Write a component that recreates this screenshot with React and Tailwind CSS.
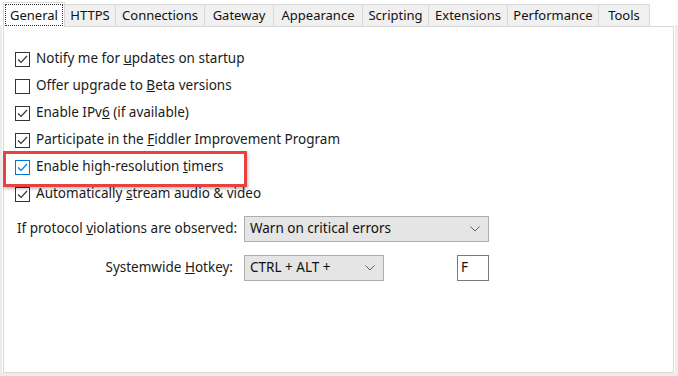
import React from "react";

const tabs = [
  { label: "HTTPS", w: 51 },
  { label: "Connections", w: 89 },
  { label: "Gateway", w: 69 },
  { label: "Appearance", w: 89 },
  { label: "Scripting", w: 66 },
  { label: "Extensions", w: 79 },
  { label: "Performance", w: 91 },
  { label: "Tools", w: 51 },
];

function Check({ checked, focus }) {
  const border = focus ? "border-[#0078d7]" : "border-[#333333]";
  const stroke = focus ? "#0078d7" : "#333333";
  return (
    <span
      className={`w-[15px] h-[15px] border bg-white flex items-center justify-center shrink-0 ${border}`}
    >
      {checked && (
        <svg width="11" height="11" viewBox="0 0 11 11">
          <path d="M1 5.5 L4 8.5 L10 2" fill="none" stroke={stroke} strokeWidth="1.2" />
        </svg>
      )}
    </span>
  );
}

function Chevron() {
  return (
    <svg width="10" height="6" viewBox="0 0 10 6">
      <path d="M0.5 0.5 L5 5 L9.5 0.5" fill="none" stroke="#606060" strokeWidth="1" />
    </svg>
  );
}

function Row({ checked, focus, children }) {
  return (
    <div className="h-[27px] flex items-center pl-[11px] gap-[6px]">
      <Check checked={checked} focus={focus} />
      <span className="text-[#1b1b1b] mt-[-2px]">{children}</span>
    </div>
  );
}

export default function App() {
  return (
    <div className="w-[678px] h-[376px] bg-white relative font-['Noto_Sans',sans-serif] text-[13.5px] leading-none overflow-hidden">
      {/* tabs */}
      <div className="flex items-end h-[26px] pl-[3px] text-[13px]">
        <div className="w-[62px] h-[25px] bg-white border border-b-0 border-[#d9d9d9] p-[1px] relative z-10 mb-[-1px]">
          <div className="w-full h-[22px] border border-dotted border-[#333] flex items-center justify-center text-[#111]">
            General
          </div>
        </div>
        {tabs.map((t) => (
          <div
            key={t.label}
            style={{ width: t.w }}
            className="h-[22px] bg-[#f0f0f0] border border-l-0 border-b-0 border-[#d9d9d9] flex items-center justify-center text-[#111] pb-[1px]"
          >
            {t.label}
          </div>
        ))}
      </div>

      {/* panel */}
      <div className="mx-[3px] w-[671px] h-[347px] border border-[#d9d9d9] bg-white pt-[19px]">
        <Row checked>
          Notify me for <u>u</u>pdates on startup
        </Row>
        <Row>
          Offer upgrade to <u>B</u>eta versions
        </Row>
        <Row checked>
          Enable IPv<u>6</u> (if available)
        </Row>
        <Row checked>
          Participate in the <u>F</u>iddler Improvement Program
        </Row>
        <Row checked focus>
          Enable high-resolution <u>t</u>imers
        </Row>
        <Row checked>
          Automatically <u>s</u>tream audio &amp; video
        </Row>

        <div className="flex items-center mt-[8px] h-[26px]">
          <span className="w-[240px] pl-[13px] text-[#1b1b1b] whitespace-nowrap">
            If protocol <u>v</u>iolations are observed:
          </span>
          <div className="w-[245px] h-[26px] bg-[#e5e5e5] border border-[#adadad] flex items-center justify-between pl-[5px] pr-[8px] text-[#111]">
            <span>Warn on critical errors</span>
            <Chevron />
          </div>
        </div>

        <div className="flex items-center mt-[13px] h-[26px]">
          <span className="w-[240px] pr-[11px] text-right text-[#1b1b1b]">
            Systemwide <u>H</u>otkey:
          </span>
          <div className="w-[140px] h-[26px] bg-[#e5e5e5] border border-[#adadad] flex items-center justify-between pl-[5px] pr-[8px] text-[#111]">
            <span>CTRL + ALT +</span>
            <Chevron />
          </div>
          <div className="ml-[73px] w-[32px] h-[26px] border border-[#7a7a7a] bg-white flex items-center pl-[3px] text-[#111]">
            F
          </div>
        </div>
      </div>
      <div className="absolute left-0 top-[25px] w-[2px] h-[350px] bg-[#ececec]" />
      <div className="absolute right-0 top-[25px] w-[3px] h-[351px] bg-[#ececec]" />
      <div className="absolute left-0 bottom-0 w-full h-[3px] bg-[#ececec]" />

      {/* annotation highlight */}
      <div className="absolute left-[3px] top-[151px] w-[244px] h-[36px] border-[3px] border-[#e8413f] shadow-[1px_2px_3px_rgba(0,0,0,0.25)]" />
    </div>
  );
}
